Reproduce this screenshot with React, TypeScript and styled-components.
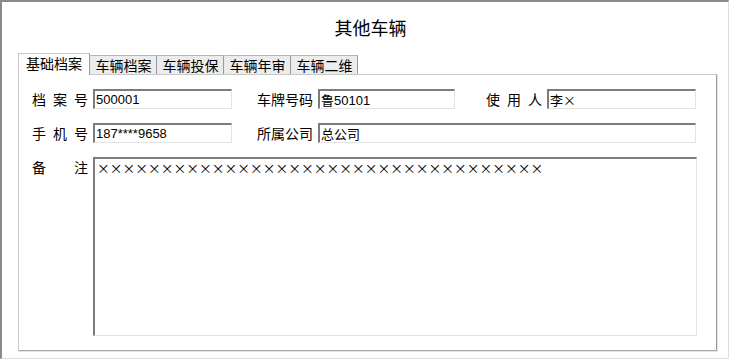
import styled, { createGlobalStyle } from "styled-components";

const GlobalStyle = createGlobalStyle`
	html, body {
		margin: 0;
		padding: 0;
		background: #fff;
	}
	* {
		box-sizing: border-box;
	}
`;

const cjk = `"Noto Sans CJK SC", "Noto Sans", sans-serif`;
const mixed = `"Liberation Sans", "Noto Sans CJK SC", sans-serif`;

const tabs = ["基础档案", "车辆档案", "车辆投保", "车辆年审", "车辆二维"];

const Label = ({ text, spread }: { text: string; spread?: boolean }) => (
	<LabelBox>
		{spread ? (
			<Spread>
				{text.split("").map((c, i) => (
					<span key={i}>{c}</span>
				))}
			</Spread>
		) : (
			text
		)}
	</LabelBox>
);

const App = () => {
	return (
		<>
			<GlobalStyle />
			<Frame>
				<Title>其他车辆</Title>
				<TabBar>
					{tabs.map((t, i) => (
						<Tab key={t} $active={i === 0}>
							{t}
						</Tab>
					))}
				</TabBar>
				<Panel>
					<RowTop>
						<Label text="档案号" spread />
						<Field readOnly defaultValue="500001" />
						<Label text="车牌号码" />
						<Field readOnly defaultValue="鲁50101" />
						<Label text="使用人" spread />
						<Field readOnly defaultValue="李×" $cjk />
					</RowTop>
					<RowSecond>
						<Label text="手机号" spread />
						<Field readOnly defaultValue="187****9658" />
						<Label text="所属公司" />
						<Field readOnly defaultValue="总公司" />
					</RowSecond>
					<RemarkRow>
						<Label text="备注" spread />
						<Remark readOnly defaultValue={"×".repeat(35)} />
					</RemarkRow>
				</Panel>
			</Frame>
		</>
	);
};

const Frame = styled.div`
	width: 729px;
	height: 359px;
	border-top: 2px solid #8a8a8a;
	border-left: 2px solid #8a8a8a;
	border-right: 1px solid #dedede;
	border-bottom: 1px solid #dedede;
	padding: 0 11px 0 16px;
	display: flex;
	flex-direction: column;
	background: #fff;
`;

const Title = styled.div`
	height: 50px;
	display: flex;
	align-items: center;
	justify-content: center;
	padding-left: 6px;
	font-family: ${cjk};
	font-size: 18px;
	color: #000;
`;

const TabBar = styled.div`
	display: flex;
	align-items: flex-end;
	height: 22px;
	position: relative;
	z-index: 1;
`;

const Tab = styled.div<{ $active?: boolean }>`
	font-family: ${cjk};
	font-size: 14px;
	color: #000;
	display: flex;
	align-items: center;
	justify-content: center;
	width: ${(p) => (p.$active ? "72px" : "67px")};
	height: ${(p) => (p.$active ? "22px" : "19px")};
	margin-bottom: ${(p) => (p.$active ? "-1px" : "0")};
	background: ${(p) => (p.$active ? "#fff" : "#ececec")};
	border-top: 1px solid ${(p) => (p.$active ? "#c8c8c8" : "#b4b4b4")};
	border-left: 1px solid ${(p) => (p.$active ? "#c8c8c8" : "#e6e6e6")};
	border-right: 1px solid #9a9a9a;
	padding-bottom: ${(p) => (p.$active ? "3px" : "0")};
	line-height: 1;
`;

const Panel = styled.div`
	height: 277px;
	width: 699px;
	border-top: 1px solid #c8c8c8;
	border-left: 1px solid #c8c8c8;
	border-right: 1px solid #9a9a9a;
	border-bottom: 1px solid #a8a8a8;
	box-shadow: 1px 1px 0 #e4e4e4;
	padding: 14px 0 0 13px;
	display: flex;
	flex-direction: column;
	gap: 14px;
`;

const RowTop = styled.div`
	display: grid;
	grid-template-columns: 61px 139px 86px 137px 92px 149px;
	height: 20px;
`;

const RowSecond = styled.div`
	display: grid;
	grid-template-columns: 61px 139px 86px 378px;
	height: 20px;
`;

const RemarkRow = styled.div`
	display: grid;
	grid-template-columns: 61px 604px;
	height: 179px;
`;

const LabelBox = styled.div`
	font-family: ${cjk};
	font-size: 14px;
	color: #000;
	display: flex;
	align-items: flex-start;
	justify-content: flex-end;
	padding-right: 5px;
	line-height: 20px;
	height: 20px;
`;

const Spread = styled.div`
	width: 56px;
	display: flex;
	justify-content: space-between;
`;

const sunken = `
	border-top: 2px solid #7c7c7c;
	border-left: 2px solid #7c7c7c;
	border-right: 1px solid #e2e2e2;
	border-bottom: 1px solid #e2e2e2;
	background: #fff;
	outline: none;
	margin: 0;
	color: #000;
`;

const Field = styled.input<{ $cjk?: boolean }>`
	${sunken}
	width: 100%;
	height: 20px;
	padding: 0 0 0 1px;
	font-family: ${(p) => (p.$cjk ? cjk : mixed)};
	font-size: 13px;
`;

const Remark = styled.textarea`
	${sunken}
	width: 100%;
	height: 179px;
	resize: none;
	padding: 1px 0 0 2px;
	font-family: ${cjk};
	font-size: 12.75px;
	line-height: 16px;
	overflow: hidden;
`;

export default App;
